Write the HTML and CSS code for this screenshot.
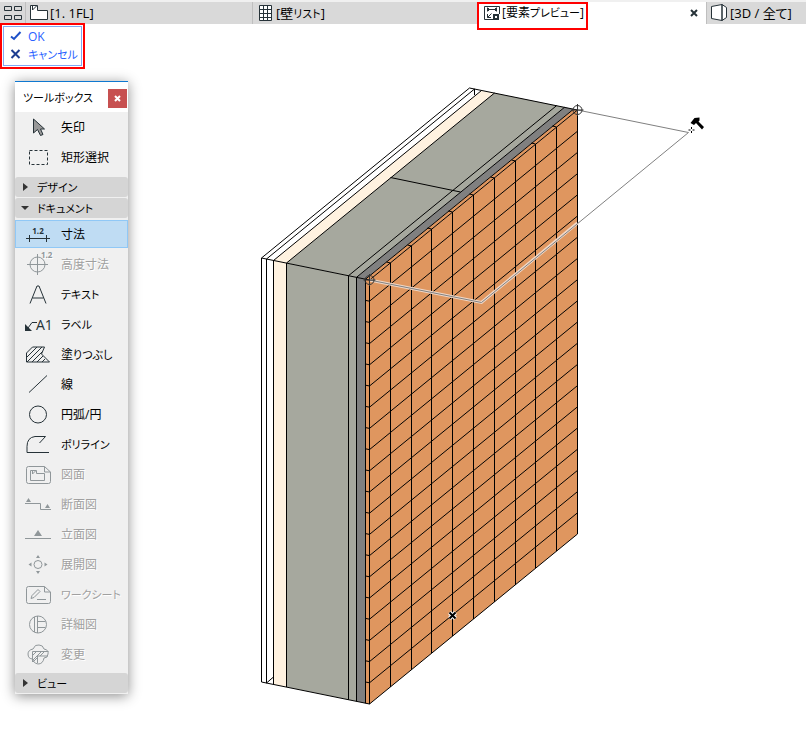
FILE: index.html
```html
<!DOCTYPE html>
<html lang="ja">
<head>
  <meta charset="UTF-8">
  <meta name="viewport" content="width=device-width, initial-scale=1.0">
  <title>要素プレビュー</title>
  <link rel="stylesheet" href="styles.css">
</head>
<body>
  <nav class="tabs">
    <button class="overview" aria-label="タブ一覧">
      <svg width="19" height="14" viewBox="0 0 19 14"><path d="M.5.5h7v4h-7zM10.500.5h7v4h-7zM.5 9.500h7v4h-7zM10.500 9.500h7v4h-7z"/></svg>
    </button>
    <button class="tab">
      <svg width="18" height="16" viewBox="0 0 18 16"><path class="white" d="M.5.5h7v5h10v9H.5z"/><path d="M2.500 1v4l4-4"/></svg>
      <span>[1. 1FL]</span>
    </button>
    <button class="tab tab-list">
      <svg width="14" height="16" viewBox="0 0 14 16"><path class="white" d="M.5.5h12v15H.5z"/><path d="M4.500.5v15M8.500.5v15M.5 4.500h12M.5 8.500h12M.5 12.500h12"/></svg>
      <span>[壁<span class="kana">リスト</span>]</span>
    </button>
    <div class="tab active">
      <svg width="16" height="16" viewBox="0 0 16 16"><path d="M9 14.500H.5V1.500h15V9M3 4.500h10M3.500 2.500v4M12.500 2.500v4M5 3L3.500 4.500 5 6M11 3l1.500 1.500L11 6M7.500 8.500l-4 4M3.500 9v3.500H7"/><path class="thick" d="M10 10h4v4h-4z"/></svg>
      <span>[要素<span class="kana">プレビュー</span>]</span>
      <button class="tab-close" aria-label="タブを閉じる"><svg width="8" height="8" viewBox="0 0 8 8"><path class="thick" d="M1 1l6 6M7 1L1 7"/></svg></button>
    </div>
    <button class="tab tab-3d">
      <svg width="17" height="18" viewBox="0 0 17 18"><path class="white" d="M.5 2.500L11 .5v16L.5 14.500zM11 .5l4.500 3v10L11 16.500z"/></svg>
      <span>[3D / 全て]</span>
    </button>
    <div class="mark mark-tab"></div>
  </nav>

  <main class="stage">
    <div class="confirm">
      <button><svg width="12" height="10" viewBox="0 0 12 10"><path class="ok" d="M1 5.500l3 2.500L10.500 1"/></svg>OK</button>
      <button class="kana"><svg width="12" height="10" viewBox="0 0 12 10"><path class="cancel" d="M1.500 1l8 8M9.500 1l-8 8"/></svg>キャンセル</button>
    </div>

    <svg class="drawing" width="470" height="650" viewBox="250 70 470 650">
      <!-- front layers -->
      <path fill="#fff" d="M261.500 258l12 2.500v424l-12-2.500z"/>
      <path fill="#fff2e0" d="M273.500 260.500l13 2.500v424l-13-2.500z"/>
      <path fill="#a6a89e" d="M286.500 263l70 14.300v424l-70-14.300z"/>
      <path fill="#808080" d="M356.500 277.300l9 1.900v424l-9-1.900z"/>
      <path fill="#df965f" d="M365.500 279.200l4 .8 208-170v424l-208 170-4-.8z"/>
      <!-- top layers -->
      <path fill="#fff2e0" d="M273.500 260.500l208-170 13 2.500-208 170z"/>
      <path fill="#a6a89e" d="M286.500 263l208-170 70 14.300-208 170z"/>
      <path fill="#808080" d="M356.500 277.300l208-170 9 1.900-208 170z"/>
      <path fill="#df965f" d="M365.500 279.200l208-170 4 .8-208 170z"/>
      <!-- layer edges -->
      <path class="edge" d="M261.500 682V258l208-170M266.500 683V259l208-170M273.500 684.500v-424l208-170M286.500 687V263l208-170M348.500 699.700v-424l208-170M356.500 701.300v-424l208-170M365.500 703.200v-424l208-170M369.500 704V280l208-170v424z"/>
      <path class="edge" d="M261.500 258l108 22M261.500 682l108 22M469.500 88l108 22M474.500 89v6M266.500 683l7-6M390.500 177.500l70 14.500"/>
      <!-- tile joints -->
      <path class="edge" d="M390.500 687V263l-4-1M411.500 670V246l-4-1M431.500 653V229l-4-1M452.500 636V212l-4-1M473.500 619V195l-4-1M494.500 602V178l-4-1M515.500 585V161l-4-1M535.500 568V144l-4-1M556.500 551V127l-4-1"/>
      <path class="edge" d="M365.500 300.400l4 .8 208-170m-212 190.400l4 .8 208-170m-212 190.400l4 .8 208-170m-212 190.400l4 .8 208-170m-212 190.400l4 .8 208-170m-212 190.400l4 .8 208-170m-212 190.400l4 .8 208-170m-212 190.400l4 .8 208-170m-212 190.400l4 .8 208-170m-212 190.400l4 .8 208-170m-212 190.400l4 .8 208-170m-212 190.400l4 .8 208-170m-212 190.400l4 .8 208-170m-212 190.400l4 .8 208-170m-212 190.400l4 .8 208-170m-212 190.400l4 .8 208-170m-212 190.400l4 .8 208-170m-212 190.400l4 .8 208-170m-212 190.400l4 .8 208-170"/>
      <!-- dimension line being placed -->
      <path class="halo" d="M369.500 280l112 22.500 96-79.500"/>
      <path class="guide" d="M369.500 280l112 22.500L688.500 132.500 577.500 110"/>
      <g class="node"><circle cx="369.500" cy="280" r="4.500"/><path d="M363.500 280h12M369.500 274v12"/></g>
      <g class="node"><circle cx="577.500" cy="110" r="4.500"/><path d="M571.500 110h12M577.500 104v12"/></g>
      <path class="hot-halo" d="M449.500 612.500l6 6M455.500 612.500l-6 6"/>
      <path class="hot" d="M449.500 612.500l6 6M455.500 612.500l-6 6"/>
      <path d="M690.500 123l4-5 5-.5v3l-1 1 5.500 5.500-2 2.500-6-6.500-2 2z"/>
      <path class="edge" d="M691.500 127v2M691.500 131v2M688.500 130h2M692.500 130h2"/>
    </svg>

    <section class="toolbox">
      <header class="toolbox-title">
        <h1 class="kana">ツールボックス</h1>
        <button class="close" aria-label="閉じる"><svg width="7" height="7" viewBox="0 0 7 7"><path d="M1 1l5 5M6 1L1 6"/></svg></button>
      </header>
      <button class="tool"><svg class="icon" viewBox="0 0 28 24"><path fill="#999" d="M9.500 4v14l4-3.500 3 6 2.500-1-2.500-5.500h4z"/></svg>矢印</button>
      <button class="tool"><svg class="icon" viewBox="0 0 28 24"><path stroke-dasharray="3 2" d="M5.500 5.500h18v14h-18z"/></svg>矩形選択</button>
      <button class="group closed kana">デザイン</button>
      <button class="group open kana">ドキュメント</button>
      <button class="tool selected"><svg class="icon" viewBox="0 0 28 24"><path d="M2 16.500h24M5.500 13v7M22.500 13v7"/><text x="14" y="12" text-anchor="middle">1.2</text></svg>寸法</button>
      <button class="tool" disabled><svg class="icon" viewBox="0 0 28 24"><circle cx="13.500" cy="12.500" r="7.500"/><path d="M3 12.500h21M13.500 2v21"/><text x="17" y="6">1.2</text></svg>高度寸法</button>
      <button class="tool kana"><svg class="icon" viewBox="0 0 28 24"><path d="M6 21.500L13 4h2l7 17.500M8.500 16h11"/></svg>テキスト</button>
      <button class="tool kana"><svg class="icon" viewBox="0 0 28 24"><path d="M4 16l4-5.500h5"/><path class="solid" d="M1 12v7h7z"/><text class="label" x="12" y="18">A1</text></svg>ラベル</button>
      <button class="tool"><svg class="icon" viewBox="0 0 28 24"><path d="M2.500 20V11l6-6h12l-3 7 8 8zM3 15L13 5M3 20L18 5M8 20L19 9M13 20l6-6M18 20l3-3"/></svg><span>塗<span class="kana">りつぶし</span></span></button>
      <button class="tool"><svg class="icon" viewBox="0 0 28 24"><path d="M5 20.500L23 3.500"/></svg>線</button>
      <button class="tool"><svg class="icon" viewBox="0 0 28 24"><circle cx="14" cy="12.500" r="8.500"/></svg>円弧/円</button>
      <button class="tool kana"><svg class="icon" viewBox="0 0 28 24"><path d="M15.500 11l6-6.500H11q-8 1-8 10v6h22"/></svg>ポリライン</button>
      <button class="tool" disabled><svg class="icon" viewBox="0 0 28 24"><path d="M4.500 4.500h16l6 5.500v9.500q0 2-2 2h-20q-2 0-2-2v-13q0-2 2-2zM20.500 4.500v5.500h6M6.500 8.500h6v3h8v7h-14zM8.500 9v3l3-3"/></svg>図面</button>
      <button class="tool" disabled><svg class="icon" viewBox="0 0 28 24"><path d="M1 11.500h15.500v6H27"/><path class="solid" d="M2 10l2.500-4L7 10zM21 16l2.500-4 2.500 4z"/></svg>断面図</button>
      <button class="tool" disabled><svg class="icon" viewBox="0 0 28 24"><path d="M1 16.500h26"/><path class="solid" d="M10 14l4-6 4 6z"/></svg>立面図</button>
      <button class="tool" disabled><svg class="icon" viewBox="0 0 28 24"><circle cx="14" cy="12.500" r="4"/><path class="solid" d="M12 6l2-3 2 3zM12 19l2 3 2-3zM7.500 10.500l-3 2 3 2zM20.500 10.500l3 2-3 2z"/></svg>展開図</button>
      <button class="tool kana" disabled><svg class="icon" viewBox="0 0 28 24"><path d="M4.500 4.500h16l6 5.500v9.500q0 2-2 2h-20q-2 0-2-2v-13q0-2 2-2zM20.500 4.500v5.500h6M7 16.500l1-3 6-6 2 2-6 6zM13 17.500h9"/></svg>ワークシート</button>
      <button class="tool" disabled><svg class="icon" viewBox="0 0 28 24"><circle cx="14" cy="12.500" r="8.500"/><path d="M10.500 5v15M13.500 4v17M13.500 9.500h8M13.500 15.500h8"/></svg>詳細図</button>
      <button class="tool" disabled><svg class="icon" viewBox="0 0 28 24"><path d="M9 7q2-5 6-4 4 0 5 4 5 1 4 5 0 4-4 4-1 6-6 6-5-1-5-5-5 0-5-5 0-4 5-5z"/><path d="M8.500 20V9.500h16M13.500 21v-7h10M9 13l3-3M9 18l8-8M16 14l4-4M9 20l4-4"/></svg>変更</button>
      <button class="group closed last kana">ビュー</button>
    </section>
  </main>
</body>
</html>
```
FILE: styles.css
```css
*,
*::before {
  box-sizing: border-box;
}

body {
  margin: 0;
  background: #fff;
  color: #000;
  font-family: "Open Sans", "Noto Sans CJK JP", sans-serif;
  font-size: 12px;
}

button {
  margin: 0;
  padding: 0;
  border: 0;
  background: none;
  color: inherit;
  font: inherit;
  font-feature-settings: "palt";
  text-align: left;
  white-space: nowrap;
}

svg {
  display: block;
  flex: none;
  fill: none;
  stroke: #263238;
}

.kana {
  font-size: 11px;
}

/* tab bar */
.tabs {
  position: relative;
  display: flex;
  height: 24px;
  border-top: 2px solid #f0f0f0;
  background: #d9d9d9;
}

.overview {
  flex: none;
  width: 25px;
  padding: 4px 0 4px 4px;
}

.tab {
  flex: 0 0 227px;
  display: flex;
  align-items: center;
  gap: 2px;
  padding: 0 8px 0 4px;
  border-left: 1px solid #bfbfbf;
  font-size: 13px;
  font-feature-settings: "palt";
  line-height: 20px;
  white-space: nowrap;
  overflow: hidden;
}

.tab-list {
  gap: 3px;
  padding-left: 6px;
}

.tab.active {
  background: #fff;
  border-color: #fff;
  font-size: 12px;
}

.tab-3d {
  flex: 1 0 100px;
}

.tab-close {
  margin-left: auto;
}

.white {
  fill: #fff;
}

.thick {
  stroke-width: 2;
}

.mark {
  position: absolute;
  border: 2px solid #f00;
  pointer-events: none;
}

.mark-tab {
  left: 477px;
  top: 0;
  width: 111px;
  height: 28px;
}

/* work area */
.stage {
  position: relative;
  display: flex;
  justify-content: center;
  padding: 46px 0 10px 164px;
}

.drawing {
  stroke: none;
  fill: #000;
}

.edge {
  fill: none;
  stroke: #000;
}

.halo {
  fill: none;
  stroke: #f0d8c8;
  stroke-width: 3;
}

.guide {
  fill: none;
  stroke: #808080;
}

.node {
  fill: none;
  stroke: #333;
}

.hot-halo {
  stroke: #fff;
  stroke-width: 4;
}

.hot {
  stroke: #000;
  stroke-width: 2;
}

.confirm {
  position: absolute;
  left: 0;
  top: -1px;
  width: 85px;
  padding: 2px 1px 4px;
  border: 2px solid #f00;
  background: #fff;
  box-shadow: inset 0 0 0 1px #fff, inset 0 0 0 2px #7fa8f5;
  color: #2962ff;
}

.confirm button {
  display: flex;
  align-items: center;
  gap: 6px;
  width: 100%;
  height: 18px;
  padding-left: 7px;
}

.ok {
  stroke: #1e50c8;
  stroke-width: 2;
}

.cancel {
  stroke: #1c3c90;
  stroke-width: 2;
}

/* toolbox */
.toolbox {
  position: absolute;
  left: 15px;
  top: 57px;
  width: 113px;
  padding-bottom: 1px;
  border-top: 1px solid #0f78d0;
  background: #f0f0f0;
  box-shadow: 0 2px 12px rgba(0, 0, 0, 0.45);
}

.toolbox-title {
  display: flex;
  align-items: center;
  justify-content: space-between;
  height: 30px;
  padding: 0 1px 0 8px;
  background: #fff;
}

.toolbox-title h1 {
  margin: 0;
  font-weight: normal;
  font-feature-settings: "palt";
}

.close {
  display: flex;
  align-items: center;
  justify-content: center;
  width: 19px;
  height: 19px;
  margin-top: 3px;
  background: #c75050;
}

.close svg {
  stroke: #fff;
  stroke-width: 2;
}

.tool {
  display: flex;
  align-items: center;
  gap: 9px;
  width: 100%;
  height: 30px;
  padding-left: 9px;
}

.tool.selected {
  height: 28px;
  margin: 1px 0;
  background: #bfdcf3;
  box-shadow: inset 0 0 0 1px #90c8f6;
}

.tool:disabled {
  color: #a0a0a0;
  text-shadow: 1px 1px #fff;
}

.icon {
  width: 28px;
  height: 24px;
  overflow: visible;
}

.icon text {
  fill: #263238;
  stroke: none;
  font-size: 8px;
  font-weight: bold;
}

.icon .label {
  font-size: 14px;
  font-weight: normal;
}

.icon .solid {
  fill: #263238;
  stroke: none;
}

.tool:disabled .icon {
  stroke: #90979a;
}

.tool:disabled .icon text,
.tool:disabled .solid {
  fill: #90979a;
}

.group {
  display: flex;
  align-items: center;
  gap: 9px;
  width: 100%;
  height: 20px;
  padding-left: 8px;
  border-radius: 3px;
  background: #d5d5d5;
}

.group::before {
  content: "";
  border: 4px solid transparent;
}

.group.closed {
  margin-top: 5px;
}

.group.closed::before {
  border-left: 5px solid #333;
  border-right: 0;
}

.group.open {
  gap: 8px;
  margin: 1px 0 2px;
  padding-left: 6px;
}

.group.open::before {
  border-top-color: #333;
  border-bottom: 0;
}

.group.last {
  margin-top: 4px;
}
```
